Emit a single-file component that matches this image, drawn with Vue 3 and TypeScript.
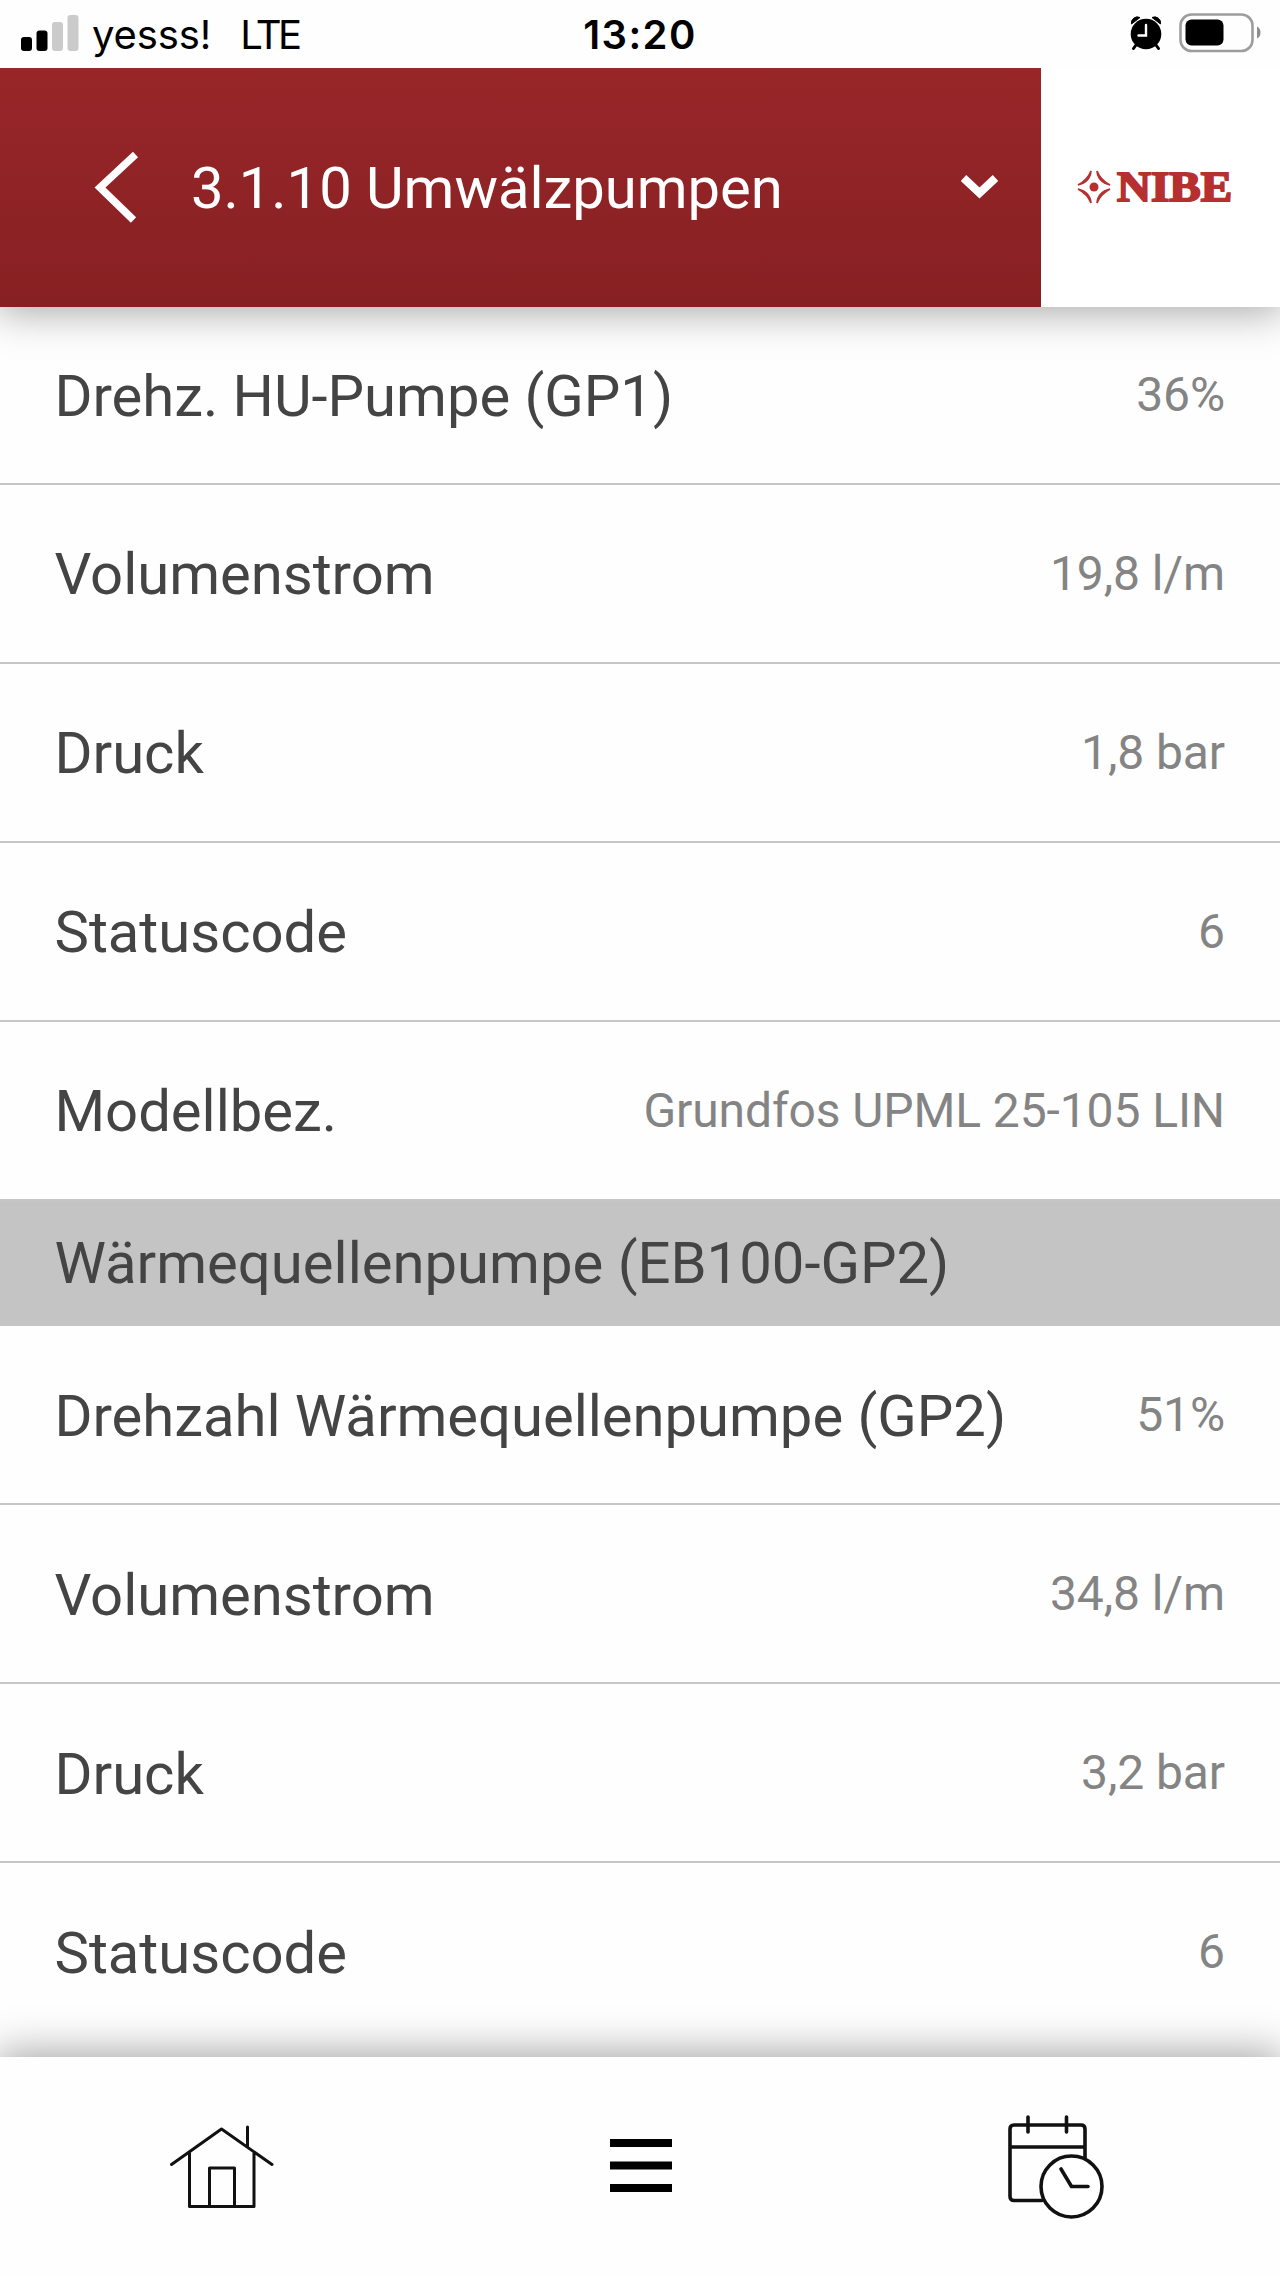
<script setup lang="ts">
interface Row {
  label: string
  value: string
}

const supplyPump: Row[] = [
  { label: 'Drehz. HU-Pumpe (GP1)', value: '36%' },
  { label: 'Volumenstrom', value: '19,8 l/m' },
  { label: 'Druck', value: '1,8 bar' },
  { label: 'Statuscode', value: '6' },
  { label: 'Modellbez.', value: 'Grundfos UPML 25-105 LIN' },
]

const sourcePump: Row[] = [
  { label: 'Drehzahl Wärmequellenpumpe (GP2)', value: '51%' },
  { label: 'Volumenstrom', value: '34,8 l/m' },
  { label: 'Druck', value: '3,2 bar' },
  { label: 'Statuscode', value: '6' },
]
</script>

<template>
  <div class="screen">
    <div class="status">
      <div class="carrier">
        <svg class="signal" width="58" height="38" viewBox="0 0 58 38">
          <rect x="0" y="23" width="11" height="14" rx="3" />
          <rect x="15.500" y="16.500" width="11" height="20.500" rx="3" />
          <rect x="31" y="8" width="11" height="29" rx="3" fill="#cbcbcb" />
          <rect x="46.500" y="1" width="11" height="36" rx="3" fill="#cbcbcb" />
        </svg>
        <span class="operator">yesss!</span>
        <span class="network">LTE</span>
      </div>
      <span class="time">13:20</span>
      <div class="indicators">
        <svg width="32" height="36" viewBox="0 0 32 36">
          <g stroke="#000" stroke-width="3" stroke-linecap="round">
            <path d="M6 30L3.500 33.500M26 30l2.500 3.500" />
          </g>
          <path d="M1.500 9A6 6 0 0 1 10 2.500ZM30.500 9A6 6 0 0 0 22 2.500Z" stroke="#000" stroke-linejoin="round" />
          <circle cx="16" cy="19" r="15.300" />
          <path d="M16 10v10.500H8.500" fill="none" stroke="#fff" stroke-width="2.400" stroke-linecap="round" />
        </svg>
        <svg width="83" height="40" viewBox="0 0 83 40">
          <rect x="1.500" y="1.500" width="72" height="36.500" rx="11" fill="none" stroke="#9d9d9d" stroke-width="2.600" />
          <rect x="6.500" y="6.500" width="38" height="26" rx="6" />
          <path d="M78 13.500q3.500 1.500 3.500 6t-3.500 6Z" fill="#8e8e8e" />
        </svg>
      </div>
    </div>

    <header class="header">
      <div class="bar">
        <svg class="back" width="46" height="74" viewBox="0 0 46 74">
          <path d="M42.500 4.500L7 37.500L40.500 70" fill="none" stroke="#fff" stroke-width="7.500" />
        </svg>
        <h1 class="title"><span>3.1.10 Umwälzpumpen</span></h1>
        <svg class="chevron" width="40" height="26" viewBox="0 0 40 26">
          <path d="M3.500 4L19.500 19L35.500 4" fill="none" stroke="#fff" stroke-width="8" />
        </svg>
      </div>
      <div class="brand">
        <svg class="logo" width="164" height="48" viewBox="0 -6 164 48">
          <g fill="#b5302f">
            <circle cx="18" cy="18" r="4.500" />
            <path d="M15 2Q14 13 2 16Q11.500 11 15 2ZM21 2Q22 13 34 16Q24.500 11 21 2ZM15 34Q14 23 2 20Q11.500 25 15 34ZM21 34Q22 23 34 20Q24.500 25 21 34Z" stroke="#b5302f" stroke-width="1.700" />
          </g>
          <text class="wordmark" x="41" y="31.500" textLength="115" lengthAdjust="spacingAndGlyphs">NIBE</text>
        </svg>
      </div>
    </header>

    <main class="content">
      <div v-for="row in supplyPump" :key="row.label" class="row">
        <span class="label">{{ row.label }}</span>
        <span class="value">{{ row.value }}</span>
      </div>
      <h2 class="section"><span>Wärmequellenpumpe (EB100-GP2)</span></h2>
      <div v-for="row in sourcePump" :key="row.label" class="row">
        <span class="label">{{ row.label }}</span>
        <span class="value">{{ row.value }}</span>
      </div>
    </main>

    <nav class="nav">
      <svg class="home" width="106" height="90" viewBox="0 0 106 90" fill="none" stroke="#111" stroke-width="3" stroke-linecap="round" stroke-linejoin="round">
        <path d="M2.500 39.500L52.500 4L103 39.500M78.500 2v20M20.500 28v53.500H85V28M40.500 81.500V43H65.500v38.500" />
      </svg>
      <svg class="menu" width="62" height="54" viewBox="0 0 62 54">
        <path d="M0 0h62v8H0zM0 22.500h62v8H0zM0 45h62v8H0z" />
      </svg>
      <svg class="schedule" width="98" height="106" viewBox="0 0 98 106" fill="none" stroke="#111" stroke-width="3.600" stroke-linecap="round" stroke-linejoin="round">
        <path d="M36 86.500H8q-4 0-4-4V15q0-4 4-4H75q4 0 4 4V45M4 33H79M22 3v15M60.500 3v15" />
        <circle cx="65.500" cy="72.500" r="30.500" fill="#fff" />
        <path d="M55 55l10.500 17.500H82" />
      </svg>
    </nav>
  </div>
</template>

<style>
body {
  margin: 0;
  background: #fefefe;
}
</style>

<style scoped>
.screen {
  display: flex;
  flex-direction: column;
  width: 1280px;
  height: 2276px;
  overflow: hidden;
  background: #fefefe;
  font-family: Roboto, "Liberation Sans", sans-serif;
  white-space: nowrap;
}

.status {
  display: grid;
  grid-template-columns: 1fr auto 1fr;
  flex: none;
  height: 68px;
  box-sizing: border-box;
  padding: 0 20px 0 21px;
  font-family: Inter, sans-serif;
  font-size: 40px;
  line-height: 70px;
}

.carrier {
  display: flex;
}

.signal {
  margin-top: 14px;
}

.operator {
  margin-left: 13px;
  letter-spacing: -0.1px;
}

.network {
  margin-left: 29px;
  letter-spacing: -3.4px;
}

.time {
  font-weight: 600;
  letter-spacing: 1.4px;
  margin-left: -1px;
}

.indicators {
  display: flex;
  justify-content: flex-end;
  gap: 17px;
}

.indicators svg:first-child {
  margin-top: 15px;
}

.indicators svg:last-child {
  margin-top: 13px;
  margin-right: -2px;
}

.header {
  display: flex;
  flex: none;
  height: 238.500px;
  background: #fff;
  box-shadow: 0 0 40px 4px rgba(0, 0, 0, 0.36);
  position: relative;
  z-index: 1;
  clip-path: inset(0 0 -60px 0);
}

.bar {
  display: flex;
  align-items: center;
  width: 1041px;
  box-sizing: border-box;
  padding: 0 41px 0 93px;
  background: linear-gradient(#982629, #872022);
}

.title {
  flex: 1;
  margin: 0 0 0 52px;
  padding-top: 2px;
  font-size: 58px;
  font-weight: 400;
  letter-spacing: -0.05px;
  color: #fff;
}

.brand {
  display: flex;
  align-items: center;
  padding-left: 35px;
}

.logo {
  overflow: visible;
}

.wordmark {
  font-family: "Liberation Serif", serif;
  font-weight: 700;
  font-size: 42px;
  fill: #b5302f;
  stroke: #b5302f;
  stroke-width: 1.9px;
}

.content {
  display: flex;
  flex-direction: column;
  flex: none;
  height: 1750px;
}

.row {
  display: flex;
  flex: none;
  justify-content: space-between;
  align-items: center;
  height: 179.100px;
  box-sizing: border-box;
  padding: 0 55px 0 54.500px;
  border-bottom: 2px solid #c6c6c6;
}

.row:first-child {
  height: 178.100px;
}

.row:last-child {
  border-bottom-color: transparent;
}

.label {
  padding-top: 2px;
  font-size: 58px;
  letter-spacing: -0.03px;
  color: #444;
}

.value {
  font-size: 48px;
  letter-spacing: -0.1px;
  color: #848484;
}

.section {
  display: flex;
  flex: none;
  align-items: center;
  height: 125px;
  margin: 0;
  padding: 0 54.500px;
  box-sizing: border-box;
  background: #c4c4c4;
  font-size: 58px;
  font-weight: 400;
  color: #444;
}

.nav {
  display: flex;
  flex: none;
  justify-content: space-between;
  align-items: flex-start;
  height: 219px;
  box-sizing: border-box;
  padding: 57px 176px 0 169px;
  background: #fefefe;
  box-shadow: 0 0 40px 4px rgba(0, 0, 0, 0.36);
  position: relative;
  z-index: 1;
}

.home {
  margin-top: 11px;
}

.menu {
  margin-top: 25px;
}
</style>
